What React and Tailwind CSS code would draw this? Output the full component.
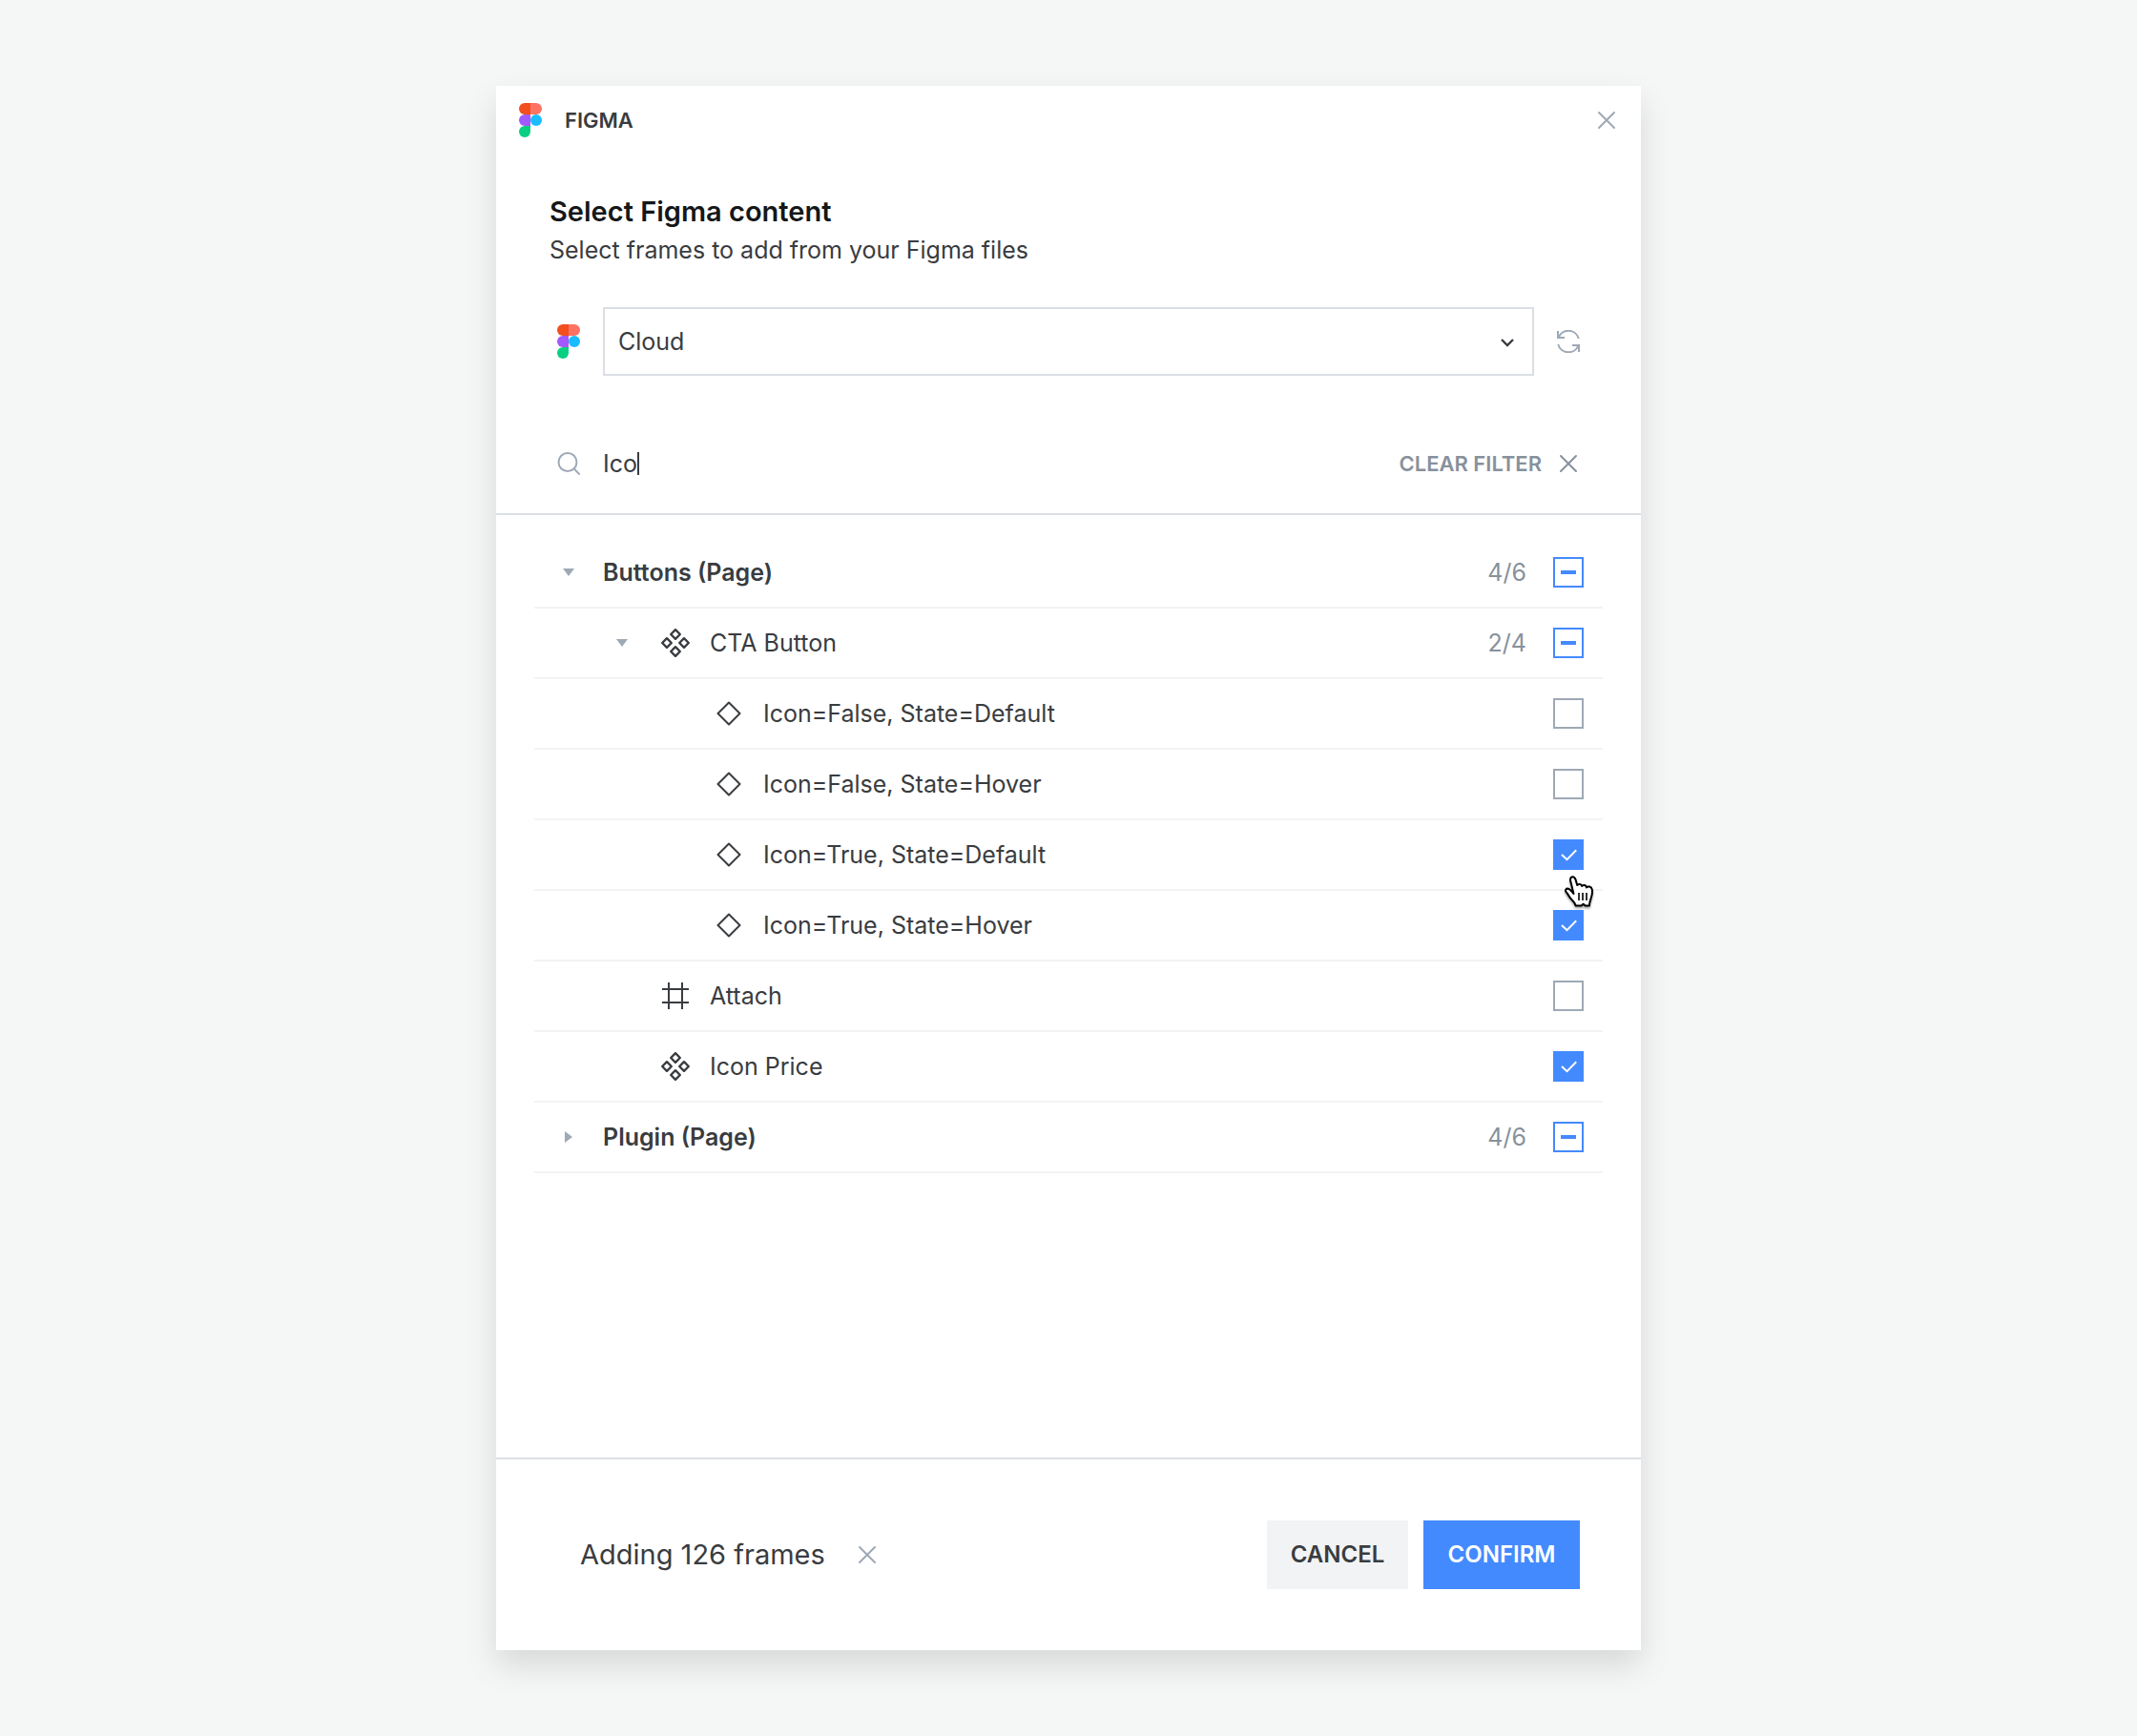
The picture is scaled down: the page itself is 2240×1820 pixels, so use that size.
import React, { useState } from "react";

const LABEL = "text-[25px] leading-[32px] text-[#393c40]";

const FigmaLogo = () => (
  <svg viewBox="0 0 24 36" className="w-6 h-9 shrink-0" aria-hidden="true">
    <path d="M6 0h6v12H6A6 6 0 0 1 6 0z" fill="#f24e1e" />
    <path d="M12 0h6a6 6 0 0 1 0 12h-6z" fill="#ff7262" />
    <path d="M6 12h6v12H6a6 6 0 0 1 0-12z" fill="#a259ff" />
    <circle cx="18" cy="18" r="6" fill="#1abcfe" />
    <path d="M6 24h6v6a6 6 0 1 1-6-6z" fill="#0acf83" />
  </svg>
);

const CloseIcon = () => (
  <svg viewBox="0 0 24 24" className="size-6" fill="none" stroke="currentColor" strokeWidth="2" strokeLinecap="round" aria-hidden="true">
    <path d="M4 4l16 16M20 4L4 20" />
  </svg>
);

const RefreshIcon = () => (
  <svg viewBox="0 0 24 24" className="size-6" fill="none" stroke="currentColor" strokeWidth="2" aria-hidden="true">
    <path d="M1 1v7h7" />
    <path d="M1.5 8A11.2 11.2 0 0 1 22.8 9" />
    <path d="M23 23v-7h-7" />
    <path d="M22.5 16A11.2 11.2 0 0 1 1.2 15" />
  </svg>
);

const SearchIcon = () => (
  <svg viewBox="0 0 24 24" className="size-6" fill="none" stroke="currentColor" strokeWidth="2" aria-hidden="true">
    <circle cx="11" cy="10.5" r="9.5" />
    <path d="M17.5 17.3L23.7 23.5" />
  </svg>
);

const ComponentSetIcon = () => (
  <svg viewBox="0 0 32 32" className="size-8" fill="none" stroke="currentColor" strokeWidth="2.4" strokeLinejoin="round" aria-hidden="true">
    <path d="M16 2.200l4.800 4.800-4.800 4.800-4.800-4.800z" />
    <path d="M16 20.200l4.800 4.800-4.800 4.800-4.800-4.800z" />
    <path d="M7 11.200l4.800 4.800-4.800 4.800-4.800-4.800z" />
    <path d="M25 11.200l4.800 4.800-4.800 4.800-4.800-4.800z" />
  </svg>
);

const VariantIcon = () => (
  <svg viewBox="0 0 32 32" className="size-8" fill="none" stroke="currentColor" strokeWidth="2" strokeLinejoin="round" aria-hidden="true">
    <path d="M16 4.500l11.500 11.500-11.500 11.500-11.500-11.500z" />
  </svg>
);

const FrameIcon = () => (
  <svg viewBox="0 0 32 32" className="size-8" fill="none" stroke="currentColor" strokeWidth="2" aria-hidden="true">
    <path d="M9 2v28M23 2v28M2 9h28M2 23h28" />
  </svg>
);

const icons = {
  set: <ComponentSetIcon />,
  variant: <VariantIcon />,
  frame: <FrameIcon />,
};

const HandCursor = () => (
  <svg viewBox="0 0 32 34" className="absolute left-3 top-[38px] z-10 w-8 h-[34px] pointer-events-none drop-shadow-[0_2px_1px_rgba(0,0,0,0.35)]" aria-hidden="true">
    <path
      d="M9.500 19L6.300 6C5.600 3 6.600 1.200 8.300 1.200S11 2.400 11.600 4.400L13.200 10C13.800 8.600 17.600 8.200 18.200 11C19.200 9.400 22.600 9.600 23 12.400C24.400 10.800 28 11 28.800 14.400C29.600 18 28.600 21 27.600 24C26.800 26.400 26 28 26 31.500H21.600L19.600 29.800L17.600 31.500H11.600C11 28.500 8.800 26.500 6.600 24.200C4.600 22 3.600 19.400 1.800 17.400C.2 15.400 1.600 13 4 13.800C6.200 14.600 7.800 16.800 9.500 19z"
      fill="#fff"
      stroke="#000"
      strokeWidth="2"
      strokeLinejoin="round"
    />
    <path d="M15 18v8M19 18v8M23 18v8" stroke="#000" strokeWidth="1.600" />
  </svg>
);

const rows = [
  { id: "buttons", label: "Buttons (Page)", level: 0, open: true, count: "4/6", state: "mixed" },
  { id: "cta", label: "CTA Button", level: 1, open: true, icon: "set", count: "2/4", state: "mixed" },
  { id: "false-default", label: "Icon=False, State=Default", level: 2, icon: "variant", state: "off" },
  { id: "false-hover", label: "Icon=False, State=Hover", level: 2, icon: "variant", state: "off" },
  { id: "true-default", label: "Icon=True, State=Default", level: 2, icon: "variant", state: "on", cursor: true },
  { id: "true-hover", label: "Icon=True, State=Hover", level: 2, icon: "variant", state: "on" },
  { id: "attach", label: "Attach", level: 1, icon: "frame", state: "off" },
  { id: "price", label: "Icon Price", level: 1, icon: "set", state: "on" },
  { id: "plugin", label: "Plugin (Page)", level: 0, open: false, count: "4/6", state: "mixed" },
];

// Left padding and the gap after the arrow, by depth
const indent = ["pl-5", "pl-[76px]", "pl-[132px]"];
const arrowGap = ["mr-5", "mr-6", "mr-6"];

const Checkbox = ({ id, state, onChange, cursor }) => {
  const color =
    state === "on"
      ? "bg-[#448aff] border-[#448aff]"
      : state === "mixed"
      ? "bg-white border-[#448aff]"
      : "bg-white border-[#9ea9b5]";

  return (
    <span className="relative grid size-8 shrink-0">
      <input
        id={id}
        type="checkbox"
        checked={state === "on"}
        ref={(el) => {
          if (el) el.indeterminate = state === "mixed";
        }}
        onChange={onChange}
        className={`col-start-1 row-start-1 appearance-none size-8 border-2 cursor-pointer ${color}`}
      />
      {state === "mixed" && (
        <span className="col-start-1 row-start-1 place-self-center w-4 h-1 bg-[#448aff] pointer-events-none" />
      )}
      {state === "on" && (
        <svg viewBox="0 0 32 32" className="col-start-1 row-start-1 size-8 pointer-events-none" fill="none" stroke="#fff" strokeWidth="2" aria-hidden="true">
          <path d="M9 16l5.500 5.200L24.200 11.200" />
        </svg>
      )}
      {cursor && <HandCursor />}
    </span>
  );
};

const TreeRow = ({ row, onToggle }) => (
  <li className={`flex items-center h-[74px] border-b-2 border-[#f2f3f5] pr-5 ${indent[row.level]}`}>
    {row.open !== undefined ? (
      <button
        className={`flex justify-center items-center size-8 text-[#9ea9b5] cursor-pointer ${arrowGap[row.level]}`}
        aria-label={`Toggle ${row.label}`}
        aria-expanded={row.open}
      >
        <svg viewBox="0 0 12 12" className="size-3" fill="currentColor" aria-hidden="true">
          {row.open ? <path d="M0 2h12L6 10z" /> : <path d="M2 0v12l8-6z" />}
        </svg>
      </button>
    ) : (
      <span className={`size-8 ${arrowGap[row.level]}`} />
    )}
    {row.icon && <span className="text-[#393c40] mr-5">{icons[row.icon]}</span>}
    <label htmlFor={row.id} className={`flex-1 cursor-pointer ${LABEL} ${row.level === 0 ? "font-semibold" : ""}`}>
      {row.label}
    </label>
    {row.count && <span className="mr-7 text-[25px] leading-[32px] text-[#87919c]">{row.count}</span>}
    <Checkbox id={row.id} state={row.state} cursor={row.cursor} onChange={() => onToggle(row.id)} />
  </li>
);

const App = () => {
  const [items, setItems] = useState(rows);
  const [query, setQuery] = useState("Ico");

  const toggle = (id) => {
    setItems((prev) =>
      prev.map((r) => (r.id === id ? { ...r, state: r.state === "on" ? "off" : "on" } : r))
    );
  };

  return (
    <main className="min-h-screen flex justify-center bg-[#f4f7f6] px-4 py-[90px] font-['Inter','Liberation_Sans',sans-serif]">
      <section className="w-full max-w-[1200px] flex flex-col bg-white shadow-[0_16px_32px_rgba(0,0,0,0.12)]">
        {/* Title bar */}
        <header className="flex items-center h-[72px] px-6">
          <FigmaLogo />
          <span className="ml-6 flex-1 text-[22px] leading-[32px] font-semibold text-[#393c40]">FIGMA</span>
          <button className="text-[#9ea9b5] cursor-pointer" aria-label="Close">
            <CloseIcon />
          </button>
        </header>

        {/* Heading */}
        <div className="px-14 pt-10">
          <h1 className="text-[29px] leading-[40px] font-semibold text-[#151719]">Select Figma content</h1>
          <p className={`pt-1 ${LABEL}`}>Select frames to add from your Figma files</p>
        </div>

        {/* File picker */}
        <div className="flex items-center px-16 pt-11">
          <FigmaLogo />
          <div className="grid flex-1 mx-6">
            <select
              aria-label="Figma file"
              defaultValue="Cloud"
              className={`col-start-1 row-start-1 appearance-none w-full h-[72px] px-[14px] bg-white border-2 border-[#dbdfe4] outline-none ${LABEL}`}
            >
              <option>Cloud</option>
            </select>
            <svg viewBox="0 0 16 16" className="col-start-1 row-start-1 self-center justify-self-end mr-5 size-4 pointer-events-none" fill="none" stroke="#393c40" strokeWidth="2.4" aria-hidden="true">
              <path d="M2 6l6 6 6-6" />
            </svg>
          </div>
          <button className="text-[#9ea9b5] cursor-pointer" aria-label="Refresh">
            <RefreshIcon />
          </button>
        </div>

        {/* Filter */}
        <div className="flex items-center h-[146px] pt-10 px-16 border-b-2 border-[#dbdfe4]">
          <span className="text-[#9ea9b5]">
            <SearchIcon />
          </span>
          <div className="flex flex-1 items-center ml-6">
            <input
              type="text"
              aria-label="Filter frames"
              value={query}
              onChange={(e) => setQuery(e.target.value)}
              className={`field-sizing-content outline-none caret-transparent ${LABEL}`}
            />
            <span className="w-[2px] h-6 bg-[#393c40]" />
          </div>
          <button onClick={() => setQuery("")} className="flex items-center gap-4 text-[22px] leading-[32px] font-semibold text-[#87919c] cursor-pointer">
            CLEAR FILTER
            <CloseIcon />
          </button>
        </div>

        {/* Tree */}
        <ul className="flex-1 px-10 pt-6">
          {items.map((row) => (
            <TreeRow key={row.id} row={row} onToggle={toggle} />
          ))}
        </ul>

        <footer className="flex items-center h-[202px] pl-[88px] pr-16 border-t-2 border-[#dbdfe4]">
          <span className="text-[29px] leading-[40px] text-[#393c40]">Adding 126 frames</span>
          <button className="ml-8 text-[#9ea9b5] cursor-pointer" aria-label="Clear selection">
            <CloseIcon />
          </button>
          <div className="flex gap-4 ml-auto text-[24px] leading-[32px] font-semibold">
            <button className="px-6 h-[72px] min-w-[148px] bg-[#f2f3f5] text-[#393c40] cursor-pointer">CANCEL</button>
            <button className="px-6 h-[72px] min-w-[164px] bg-[#448aff] text-white cursor-pointer">CONFIRM</button>
          </div>
        </footer>
      </section>
    </main>
  );
};

export default App;
